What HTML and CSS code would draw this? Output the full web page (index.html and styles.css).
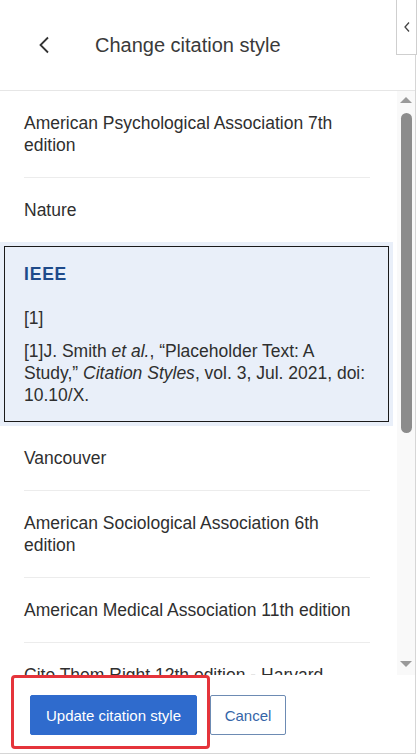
FILE: index.html
```html
<!DOCTYPE html>
<html lang="en">
<head>
<meta charset="utf-8">
<title>Change citation style</title>
<link rel="stylesheet" href="styles.css">
</head>
<body>
<div class="panel">
  <header class="head">
    <button class="back" aria-label="Back">
      <svg width="12" height="18" viewBox="0 0 12 18"><path d="M10 1.5 L2.5 9 L10 16.5" fill="none" stroke="#333" stroke-width="1.8"/></svg>
    </button>
    <h1 class="title">Change citation style</h1>
  </header>
  <div class="body">
    <ul class="list">
      <li class="item">American Psychological Association 7th edition</li>
      <li class="item item-last">Nature</li>
      <li class="item selected">
        <div class="sel-name">IEEE</div>
        <div class="sel-inline">[1]</div>
        <div class="sel-ref">[1]J. Smith <i>et al.</i>, “Placeholder Text: A Study,” <i>Citation Styles</i>, vol. 3, Jul. 2021, doi: 10.10/X.</div>
      </li>
      <li class="item">Vancouver</li>
      <li class="item">American Sociological Association 6th edition</li>
      <li class="item">American Medical Association 11th edition</li>
      <li class="item">Cite Them Right 12th edition - Harvard</li>
    </ul>
    <div class="scrollbar">
      <div class="arrow up"></div>
      <div class="track"><div class="thumb"></div></div>
      <div class="arrow down"></div>
    </div>
  </div>
  <footer class="foot">
    <button class="btn primary">Update citation style</button>
    <button class="btn secondary">Cancel</button>
  </footer>
  <div class="annot"></div>
  <div class="toggle">
    <svg width="8" height="12" viewBox="0 0 8 12"><path d="M6 1.5 L2 6 L6 10.5" fill="none" stroke="#444" stroke-width="1.3"/></svg>
  </div>
</div>
</body>
</html>
```
FILE: styles.css
```css
* { box-sizing: border-box; }
html, body { margin: 0; padding: 0; background: #fff; }
body {
  font-family: "Liberation Sans", Arial, sans-serif;
  color: #2f2f2f;
  width: 417px;
  height: 755px;
  overflow: hidden;
}
.panel {
  position: relative;
  width: 416px;
  height: 754px;
  border-right: 1px solid #d6d6d6;
  border-bottom: 1px solid #d6d6d6;
  display: flex;
  flex-direction: column;
}
.head {
  height: 91px;
  flex: none;
  display: flex;
  align-items: center;
  border-bottom: 1px solid #e6e6e6;
  padding-left: 38px;
}
.back {
  border: 0;
  background: none;
  padding: 0;
  width: 12px;
  height: 18px;
  display: flex;
  margin-right: 45px;
}
.title {
  margin: 0;
  font-size: 20px;
  font-weight: normal;
  color: #3a3a3a;
}
.body {
  height: 584px;
  flex: none;
  display: flex;
  overflow: hidden;
}
.list {
  list-style: none;
  margin: 0;
  padding: 0;
  flex: 1;
  font-size: 17.5px;
  line-height: 22px;
}
.item {
  margin: 0 27px 0 24px;
  padding: 21px 0;
  border-bottom: 1px solid #ececec;
}
.item-last { border-bottom: 0; }
.item.selected {
  margin: 0 4px 0 0;
  padding: 21px 23px 20px 24px;
  background: #e9eff9;
  outline: 1px solid #1a1a1a;
  outline-offset: -5px;
  border-bottom: 0;
}
.sel-name {
  font-weight: bold;
  color: #1e4a8a;
  letter-spacing: 0.8px;
}
.sel-inline { margin-top: 22px; }
.sel-ref { margin-top: 11px; }
.scrollbar {
  width: 18px;
  flex: none;
  background: #f9f9f9;
  display: flex;
  flex-direction: column;
  align-items: center;
  padding: 6px 0 8px;
}
.arrow {
  width: 0;
  height: 0;
  border-left: 6px solid transparent;
  border-right: 6px solid transparent;
}
.arrow.up { border-bottom: 6px solid #9a9a9a; }
.arrow.down { border-top: 6px solid #9a9a9a; }
.track {
  flex: 1;
  width: 100%;
  display: flex;
  justify-content: center;
  padding-top: 10px;
}
.thumb {
  width: 11px;
  height: 320px;
  background: #8c8c8c;
  border-radius: 6px;
}
.foot {
  flex: 1;
  display: flex;
  align-items: flex-start;
  padding: 20px 0 0 30px;
  gap: 13px;
}
.btn {
  height: 40px;
  font-family: "Liberation Sans", Arial, sans-serif;
  font-size: 15px;
  border-radius: 2px;
  cursor: pointer;
  padding: 0;
}
.btn.primary {
  width: 167px;
  background: #2f6bcd;
  color: #fff;
  border: 1px solid #2f6bcd;
}
.btn.secondary {
  width: 76px;
  background: #fff;
  color: #3565a8;
  border: 1px solid #6d8bb3;
}
.annot {
  position: absolute;
  left: 11px;
  top: 675px;
  width: 199px;
  height: 74px;
  border: 3px solid #e5343b;
  border-radius: 4px;
  pointer-events: none;
}
.toggle {
  position: absolute;
  top: 0;
  left: 396px;
  width: 21px;
  height: 55px;
  border: 1px solid #cfcfcf;
  border-top: 0;
  background: #fff;
  display: flex;
  align-items: center;
  justify-content: center;
}
```
